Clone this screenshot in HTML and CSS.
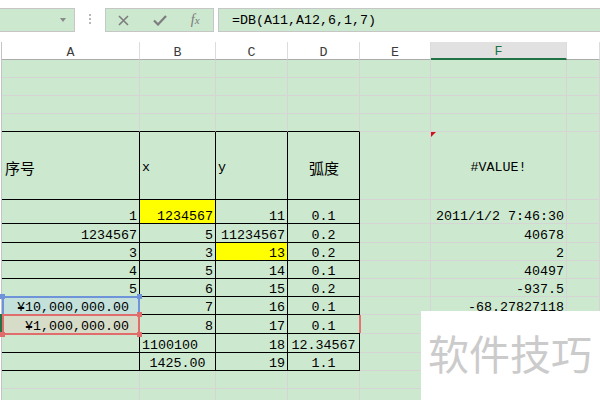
FILE: index.html
```html
<!DOCTYPE html>
<html lang="zh">
<head>
<meta charset="utf-8">
<title>DB</title>
<link rel="stylesheet" href="styles.css">
</head>
<body>
<div class="app">
  <div class="toolbar">
    <div class="namebox"><span class="tri"></span></div>
    <div class="dots"><i></i><i></i><i></i></div>
    <div class="fbox">
      <span class="ico"><svg width="11" height="11" viewBox="0 0 11 11"><path d="M1 1L10 10M10 1L1 10" stroke="#7d7d7d" stroke-width="1.6" fill="none"/></svg></span>
      <span class="ico"><svg width="14" height="11" viewBox="0 0 14 11"><path d="M1 5.5L5 9.5L13 1" stroke="#7d7d7d" stroke-width="2.2" fill="none"/></svg></span>
      <span class="ico fx">f<sub>x</sub></span>
    </div>
    <div class="formula">=DB(A11,A12,6,1,7)</div>
  </div>

  <div class="sheet">
    <div class="r hd"><div class="c">A</div><div class="c">B</div><div class="c">C</div><div class="c">D</div><div class="c">E</div><div class="c sel">F</div><div class="c"></div></div>
    <div class="r"><div class="c"></div><div class="c"></div><div class="c"></div><div class="c"></div><div class="c"></div><div class="c"></div><div class="c"></div></div>
    <div class="r"><div class="c"></div><div class="c"></div><div class="c"></div><div class="c"></div><div class="c"></div><div class="c"></div><div class="c"></div></div>
    <div class="r"><div class="c"></div><div class="c"></div><div class="c"></div><div class="c"></div><div class="c"></div><div class="c"></div><div class="c"></div></div>
    <div class="r"><div class="c kb"></div><div class="c kb"></div><div class="c kb"></div><div class="c kb"></div><div class="c"></div><div class="c"></div><div class="c"></div></div>
    <div class="r tall">
      <div class="c k l zh">序号</div><div class="c k l">x</div><div class="c k l">y</div><div class="c k m zh">弧度</div><div class="c"></div><div class="c m"><span class="cmt"></span>#VALUE!</div><div class="c"></div>
    </div>
    <div class="r h24"><div class="c k">1</div><div class="c k y">1234567</div><div class="c k">11</div><div class="c k m">0.1</div><div class="c"></div><div class="c">2011/1/2 7:46:30</div><div class="c"></div></div>
    <div class="r h19"><div class="c k">1234567</div><div class="c k">5</div><div class="c k">11234567</div><div class="c k m">0.2</div><div class="c"></div><div class="c">40678</div><div class="c"></div></div>
    <div class="r"><div class="c k">3</div><div class="c k">3</div><div class="c k y">13</div><div class="c k m">0.2</div><div class="c"></div><div class="c">2</div><div class="c"></div></div>
    <div class="r"><div class="c k">4</div><div class="c k">5</div><div class="c k">14</div><div class="c k m">0.1</div><div class="c"></div><div class="c">40497</div><div class="c"></div></div>
    <div class="r"><div class="c k">5</div><div class="c k">6</div><div class="c k">15</div><div class="c k m">0.2</div><div class="c"></div><div class="c">-937.5</div><div class="c"></div></div>
    <div class="r"><div class="c k acc refb">¥10,000,000.00</div><div class="c k">7</div><div class="c k">16</div><div class="c k m">0.1</div><div class="c"></div><div class="c">-68.27827118</div><div class="c"></div></div>
    <div class="r h19"><div class="c k acc refr">¥1,000,000.00</div><div class="c k">8</div><div class="c k">17</div><div class="c k m">0.1</div><div class="c"></div><div class="c"></div><div class="c"></div></div>
    <div class="r h19"><div class="c k"></div><div class="c k l">1100100</div><div class="c k">18</div><div class="c k m">12.34567</div><div class="c"></div><div class="c"></div><div class="c"></div></div>
    <div class="r"><div class="c k"></div><div class="c k m">1425.00</div><div class="c k">19</div><div class="c k m">1.1</div><div class="c"></div><div class="c"></div><div class="c"></div></div>
    <div class="r"><div class="c"></div><div class="c"></div><div class="c"></div><div class="c"></div><div class="c"></div><div class="c"></div><div class="c"></div></div>
    <div class="r"><div class="c"></div><div class="c"></div><div class="c"></div><div class="c"></div><div class="c"></div><div class="c"></div><div class="c"></div></div>
  </div>

  <div class="box-blue"></div>
  <div class="box-red"></div>
  <span class="hdl hb1"></span><span class="hdl hb2"></span>
  <span class="hdl hr1"></span><span class="hdl hr2"></span><span class="hdl hr3"></span>
  <div class="rowmark"></div>
  <div class="redmark"></div>

  <div class="wm">软件技巧</div>
</div>
</body>
</html>
```

FILE: styles.css
```css
body {
  margin: 0;
  background: #fff;
  font-family: "Liberation Mono", "Noto Sans CJK SC", monospace;
  font-size: 13.33px;
  color: #000;
}

.app {
  position: relative;
  width: 600px;
  height: 400px;
  overflow: hidden;
  background: #fff;
}

/* ---------- toolbar ---------- */
.toolbar {
  height: 42px;
  box-sizing: border-box;
  padding-top: 8px;
  display: flex;
  align-items: flex-start;
}

.namebox {
  width: 75px;
  height: 24px;
  box-sizing: border-box;
  border: 1px solid #c6c6c6;
  border-left: none;
  background: #cce8cf;
  display: flex;
  align-items: center;
  justify-content: flex-end;
  padding-right: 8px;
}

.tri {
  width: 0;
  height: 0;
  border-left: 3px solid transparent;
  border-right: 3px solid transparent;
  border-top: 4px solid #8a8a8a;
}

.dots {
  width: 30px;
  height: 24px;
  display: flex;
  flex-direction: column;
  align-items: center;
  gap: 2px;
  padding-top: 6px;
  box-sizing: border-box;
}

.dots i {
  width: 2px;
  height: 2px;
  background: #b8b8b8;
}

.fbox {
  width: 109px;
  height: 24px;
  box-sizing: border-box;
  border: 1px solid #c6c6c6;
  background: #cce8cf;
  display: flex;
  align-items: center;
}

.ico {
  width: 36px;
  height: 22px;
  display: flex;
  align-items: center;
  justify-content: center;
}

.fx {
  font-family: "Liberation Serif", serif;
  font-style: italic;
  font-size: 14px;
  color: #7a7a7a;
}

.fx sub {
  font-size: 11px;
  vertical-align: -1px;
}

.formula {
  margin-left: 4px;
  flex: 1;
  height: 24px;
  box-sizing: border-box;
  border: 1px solid #c6c6c6;
  border-right: none;
  background: #cce8cf;
  padding-left: 13px;
  padding-top: 1px;
  line-height: 22px;
  white-space: nowrap;
}

/* ---------- sheet ---------- */
.sheet {
  margin-left: 1px;
  border-left: 1px solid #c4c4c4;
}

.r {
  display: grid;
  grid-template-columns: 138px 76px 72px 72px 71px 136px 1fr;
  height: 18px;
}

.r.h19 { height: 19px; }
.r.h24 { height: 24px; }
.r.tall { height: 68px; }

.c {
  box-sizing: border-box;
  border-right: 1px solid #d5d5d5;
  border-bottom: 1px solid #d5d5d5;
  background: #cce8cf;
  display: flex;
  align-items: flex-end;
  justify-content: flex-end;
  padding: 0 2px;
  line-height: 12px;
  white-space: nowrap;
  position: relative;
  min-width: 0;
}

.l { justify-content: flex-start; }
.m { justify-content: center; }
.k { border-color: #000; }
.kb { border-bottom-color: #000; }
.y { background: #ffff00; }

.acc { padding-right: 10px; }
.refb { background: #c3e0da; }
.refr { background: #d6dcc8; }

.hd .c {
  background: #fff;
  border-right-color: #dcdcdc;
  border-bottom-color: #ababab;
  justify-content: center;
  color: #3c3c3c;
}

.hd .c.sel {
  background: #e1e1e1;
  border-bottom: 2px solid #217346;
  color: #217346;
}

.tall .c {
  align-items: center;
  padding-top: 4px;
}

.zh {
  font-family: "Noto Sans CJK SC", sans-serif;
  font-size: 15px;
  padding-left: 3px;
}

.cmt {
  position: absolute;
  left: 0;
  top: 0;
  width: 0;
  height: 0;
  border-top: 5px solid #d0101c;
  border-right: 5px solid transparent;
}

/* ---------- reference highlights (overlays) ---------- */
.box-blue {
  position: absolute;
  left: 2px;
  top: 296px;
  width: 138px;
  height: 19px;
  box-sizing: border-box;
  border: 2px solid #6f93d9;
  border-bottom: none;
}

.box-red {
  position: absolute;
  left: 2px;
  top: 314px;
  width: 138px;
  height: 21px;
  box-sizing: border-box;
  border: 2px solid #e06c6c;
}

.hdl {
  position: absolute;
  width: 5px;
  height: 5px;
}

.hb1 { left: 0; top: 294px; background: #6f93d9; }
.hb2 { left: 137px; top: 294px; background: #6f93d9; }
.hr1 { left: 137px; top: 312px; background: #e06c6c; }
.hr2 { left: 137px; top: 332px; background: #e06c6c; }
.hr3 { left: 0; top: 332px; background: #e06c6c; }

.rowmark {
  position: absolute;
  left: 0;
  top: 314px;
  width: 2px;
  height: 18px;
  background: #217346;
}

.redmark {
  position: absolute;
  left: 359px;
  top: 315px;
  width: 2px;
  height: 18px;
  background: #e57373;
}

.wm {
  position: absolute;
  left: 421px;
  top: 311px;
  right: 0;
  bottom: 0;
  background: #fff;
  color: #cbcbcb;
  font-family: "Noto Sans CJK SC", sans-serif;
  font-size: 41px;
  line-height: 42px;
  padding: 20px 0 0 7px;
  white-space: nowrap;
}
```
